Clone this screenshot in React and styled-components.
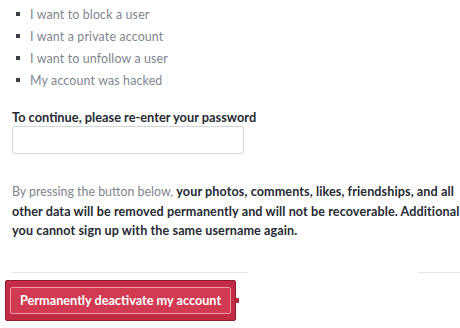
import React from 'react'
import styled, { createGlobalStyle } from 'styled-components'

const Global = createGlobalStyle`
  html, body {
    margin: 0;
    padding: 0;
    background: #fff;
    overflow: hidden;
  }
  body {
    font-family: Lato, "Liberation Sans", sans-serif;
  }
`

const Page = styled.div`
  width: 480px;
  height: 328px;
  padding: 3px 0 0 12px;
  box-sizing: border-box;
`

const Reasons = styled.ul`
  margin: 0;
  padding: 0 0 0 4px;
  list-style: none;
  display: flex;
  flex-direction: column;
`

const Reason = styled.li`
  display: flex;
  align-items: center;
  gap: 10px;
  height: 22px;
  font-size: 12.4px;
  letter-spacing: 0.15px;
  color: #80858f;

  &::before {
    content: '';
    width: 4px;
    height: 4px;
    background: #3a3f4a;
  }
`

const Label = styled.label`
  display: block;
  margin-top: 18px;
  font-size: 12.8px;
  font-weight: 700;
  color: #262a33;
`

const Input = styled.input`
  display: block;
  margin-top: 1px;
  width: 232px;
  height: 28px;
  box-sizing: border-box;
  border: 1px solid #d3d6db;
  border-radius: 3px;
  background: #fff;
`

const Warning = styled.p`
  margin: 28px 0 0;
  width: 470px;
  font-size: 12.4px;
  line-height: 19.5px;
  color: #80848d;

  b {
    color: #262a33;
    font-size: 12.6px;
    font-weight: 700;
    letter-spacing: 0.1px;
  }
`

const Rule = styled.div`
  display: flex;
  justify-content: space-between;
  margin-top: 31px;
  width: 448px;
`

const Segment = styled.span`
  height: 1px;
  width: ${p => p.$w}px;
  background: #e3e5e8;
`

const ButtonFrame = styled.div`
  display: flex;
  width: fit-content;
  position: relative;
  margin: 7px 0 0 -7px;
  padding: 6px 4px;
  border: 1px solid #8f1d2f;
  border-radius: 2px;
  background: #c22d45;
`

const Button = styled.button`
  font-family: inherit;
  font-size: 12.7px;
  font-weight: 700;
  line-height: 15px;
  color: #fff;
  background: #d13a51;
  border: 1px solid #ee9aa8;
  border-radius: 2px;
  padding: 5px 9px;
  cursor: pointer;
`

const Knob = styled.span`
  position: absolute;
  right: -4px;
  top: 50%;
  width: 5px;
  height: 5px;
  margin-top: -2px;
  background: #b3263c;
  border-radius: 1px;
`

const reasons = [
  'I want to block a user',
  'I want a private account',
  'I want to unfollow a user',
  'My account was hacked',
]

export default function App() {
  return (
    <Page>
      <Global />
      <Reasons>
        {reasons.map(r => (
          <Reason key={r}>{r}</Reason>
        ))}
      </Reasons>
      <Label htmlFor="pw">To continue, please re-enter your password</Label>
      <Input id="pw" type="password" />
      <Warning>
        By pressing the button below, <b>your photos, comments, likes, friendships, and all other data will be removed permanently and will not be recoverable. Additionally, you cannot sign up with the same username again.</b>
      </Warning>
      <Rule>
        <Segment $w={236} />
        <Segment $w={42} />
      </Rule>
      <ButtonFrame>
        <Button>Permanently deactivate my account</Button>
        <Knob />
      </ButtonFrame>
    </Page>
  )
}
